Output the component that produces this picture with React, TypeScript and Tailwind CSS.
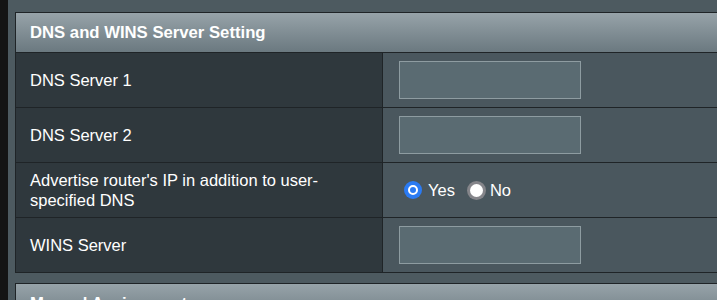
const uiFont = { fontFamily: '"Liberation Sans", Arial, Helvetica, sans-serif' };

type Row = {
  label: string;
  kind: "input" | "radio";
};

const ROWS: Row[] = [
  { label: "DNS Server 1", kind: "input" },
  { label: "DNS Server 2", kind: "input" },
  { label: "Advertise router's IP in addition to user-specified DNS", kind: "radio" },
  { label: "WINS Server", kind: "input" },
];

function SectionHeader({ title }: { title: string }) {
  return (
    <div className="flex h-[39px] items-center bg-gradient-to-b from-[#97a3a9] to-[#6b7980] pl-[14px] text-[16.7px] font-bold text-white">
      {title}
    </div>
  );
}

function RadioDot({ checked }: { checked: boolean }) {
  if (checked) {
    return (
      <span className="flex h-[18px] w-[18px] items-center justify-center rounded-full bg-[#2b7bf3]">
        <span className="h-[10px] w-[10px] rounded-full border-[2px] border-white bg-[#2b7bf3]" />
      </span>
    );
  }
  return (
    <span className="flex h-[19px] w-[19px] items-center justify-center rounded-full bg-[#85858a]">
      <span className="h-[13px] w-[13px] rounded-full bg-white" />
    </span>
  );
}

export default function App() {
  return (
    <div className="flex h-[300px] w-[717px] overflow-hidden bg-[#141414]" style={uiFont}>
      <div className="w-[8px] shrink-0" />
      <div className="flex-1 overflow-hidden bg-[#4d5a60] pl-[7px] pt-[12px]">
        <div className="w-[740px] border border-[#1f2427]">
          <SectionHeader title="DNS and WINS Server Setting" />
          {ROWS.map((row) => (
            <div key={row.label} className="flex h-[55px] border-t border-[#1f2427]">
              <div className="flex w-[367px] shrink-0 items-center border-r border-[#1f2427] bg-[#2f383d] px-[14px] text-[16.5px] leading-[20px] text-white">
                {row.label}
              </div>
              <div className="flex flex-1 items-center bg-[#4a575e] pl-[16px]">
                {row.kind === "input" ? (
                  <div className="h-[38px] w-[182px] border border-[#8e9ca1] bg-[#5a6b72]" />
                ) : (
                  <div className="flex items-center pl-[5px] text-[16.5px] text-white">
                    <RadioDot checked />
                    <span className="ml-[6px]">Yes</span>
                    <span className="ml-[12px]">
                      <RadioDot checked={false} />
                    </span>
                    <span className="ml-[4px]">No</span>
                  </div>
                )}
              </div>
            </div>
          ))}
        </div>
        <div className="mt-[10px] w-[740px] border border-[#1f2427]">
          <SectionHeader title="Manual Assignment" />
        </div>
      </div>
    </div>
  );
}
